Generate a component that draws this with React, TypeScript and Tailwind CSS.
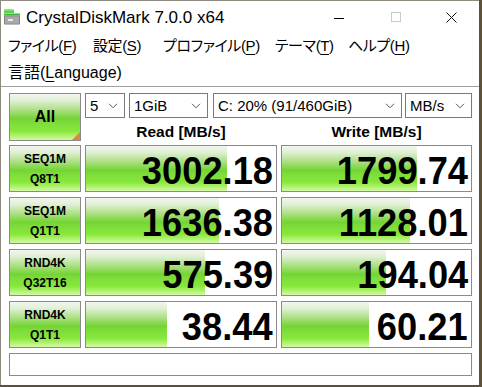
import React from "react";

const rows = [
  { l1: "SEQ1M", l2: "Q8T1", r: "3002.18", rw: 141, w: "1799.74", ww: 135 },
  { l1: "SEQ1M", l2: "Q1T1", r: "1636.38", rw: 133, w: "1128.01", ww: 128 },
  { l1: "RND4K", l2: "Q32T16", r: "575.39", rw: 119, w: "194.04", ww: 104 },
  { l1: "RND4K", l2: "Q1T1", r: "38.44", rw: 81, w: "60.21", ww: 87 },
];

const grad =
  "bg-[linear-gradient(to_bottom,#f3f6f0_0%,#e0f0d6_14%,#aee086_34%,#74d433_54%,#7edc3a_62%,#86e83a_80%,#aaf065_89%,#d4f8a8_100%)]";

const Chevron = () => (
  <svg width="10" height="6" viewBox="0 0 10 6">
    <path d="M1 0.8 L5 4.8 L9 0.8" fill="none" stroke="#5a5a5a" strokeWidth="1" />
  </svg>
);

function Combo({ cls, text }: { cls: string; text: string }) {
  return (
    <div
      className={`h-[25px] border border-[#7a7a7a] bg-white flex items-center justify-between pl-[4px] pr-[6px] text-[15px] text-black ${cls}`}
    >
      <span className="leading-none">{text}</span>
      <Chevron />
    </div>
  );
}

function Label({ a, b }: { a: string; b: string }) {
  return (
    <div
      className={`w-[72px] h-full border border-[#8a8a8a] ${grad} flex flex-col items-center justify-center text-[12px] font-bold leading-[20px] text-black`}
    >
      <span>{a}</span>
      <span>{b}</span>
    </div>
  );
}

function NumCell({ cls, val, bw }: { cls: string; val: string; bw: number }) {
  return (
    <div
      className={`relative h-full border border-[#8a8a8a] bg-white overflow-hidden flex items-center justify-end pr-[3px] pt-[3px] ${cls}`}
    >
      <div className={`absolute left-0 top-0 bottom-0 ${grad}`} style={{ width: bw }} />
      <span className="relative text-[39px] font-bold leading-none text-black origin-right scale-x-[0.93]">
        {val}
      </span>
    </div>
  );
}

function MenuItem({ cls, jp, key1 }: { cls: string; jp: string; key1: string }) {
  return (
    <div className={`shrink-0 whitespace-nowrap ${cls}`}>
      {jp}(<span className="underline underline-offset-[3px]">{key1}</span>)
    </div>
  );
}

export default function App() {
  return (
    <div className="w-[482px] h-[387px] bg-[#5d513a] overflow-hidden font-['Liberation_Sans','Noto_Sans_CJK_JP',sans-serif]">
      <div className="w-[479px] h-[385px] bg-white border-t border-l border-[#8f8a80] flex flex-col">
        {/* Title bar */}
        <div className="h-[32px] flex items-center shrink-0">
          <div className="ml-[3px] w-[16px] h-[16px]">
            <svg width="16" height="16" viewBox="0 0 16 16">
              <rect x="0" y="0" width="10" height="4" fill="#5fd04a" />
              <rect x="0" y="0" width="10" height="1.5" fill="#9be88a" />
              <rect x="0" y="4.5" width="16" height="2" fill="#3fb83a" />
              <rect x="0" y="6.5" width="16" height="9" rx="1" fill="#7a7a7a" />
              <rect x="0.8" y="7.3" width="14.4" height="7.4" rx="0.6" fill="#a9a9a9" />
              <rect x="4" y="10" width="5" height="2" fill="#e8e8e8" />
            </svg>
          </div>
          <div className="ml-[6px] text-[17px] text-black leading-none">CrystalDiskMark 7.0.0 x64</div>
          <div className="ml-auto flex h-full">
            <div className="w-[57px] h-full flex items-center justify-center">
              <div className="w-[10px] h-[1px] bg-black mt-[2px]" />
            </div>
            <div className="w-[57px] h-full flex items-center justify-center">
              <div className="w-[10px] h-[10px] border border-[#c6cbcb]" />
            </div>
            <div className="w-[55px] h-full flex items-center justify-center">
              <svg width="11" height="11" viewBox="0 0 11 11">
                <path d="M0.5 0.5 L10.5 10.5 M10.5 0.5 L0.5 10.5" stroke="#111" strokeWidth="1" />
              </svg>
            </div>
          </div>
        </div>

        {/* Menu */}
        <div className="text-[15px] tracking-[-0.4px] text-black [font-feature-settings:'palt'] shrink-0">
          <div className="h-[27px] flex items-center pl-[7px]">
            <MenuItem cls="w-[85px]" jp="ファイル" key1="F" />
            <MenuItem cls="w-[70px]" jp="設定" key1="S" />
            <MenuItem cls="w-[112px]" jp="プロファイル" key1="P" />
            <MenuItem cls="w-[73px]" jp="テーマ" key1="T" />
            <MenuItem cls="w-[80px]" jp="ヘルプ" key1="H" />
          </div>
          <div className="h-[27px] flex items-center pl-[7px] border-b border-[#a0a0a0]">
            <div className="whitespace-nowrap text-[16px] tracking-normal">
              言語(<span className="underline underline-offset-[3px]">L</span>anguage)
            </div>
          </div>
        </div>

        {/* Main */}
        <div className="pl-[8px] pt-[6px] flex flex-col">
          <div className="flex h-[52px]">
            <div
              className={`relative w-[72px] h-[48px] border border-[#8a8a8a] ${grad} flex items-center justify-center text-[16px] font-bold text-black`}
            >
              All
              <div className="absolute right-0 bottom-0 w-0 h-0 border-l-[8px] border-l-transparent border-b-[8px] border-b-[#d98a3a]" />
            </div>
            <div className="ml-[4px] flex flex-col">
              <div className="flex">
                <Combo cls="w-[40px]" text="5" />
                <Combo cls="w-[79px] ml-[4px]" text="1GiB" />
                <Combo cls="w-[189px] ml-[5px]" text="C: 20% (91/460GiB)" />
                <Combo cls="w-[67px] ml-[3px]" text="MB/s" />
              </div>
              <div className="flex h-[27px] items-center text-[15.5px] font-bold text-black">
                <div className="w-[192px] text-center">Read [MB/s]</div>
                <div className="w-[191px] ml-[4px] text-center">Write [MB/s]</div>
              </div>
            </div>
          </div>

          <div className="flex flex-col gap-[5px]">
            {rows.map((r, i) => (
              <div key={i} className="flex h-[47px]">
                <Label a={r.l1} b={r.l2} />
                <NumCell cls="w-[192px] ml-[4px]" val={r.r} bw={r.rw} />
                <NumCell cls="w-[191px] ml-[4px]" val={r.w} bw={r.ww} />
              </div>
            ))}
            <div className="h-[23px] w-[463px] border border-[#8a8a8a] bg-white" />
          </div>
        </div>
      </div>
    </div>
  );
}
